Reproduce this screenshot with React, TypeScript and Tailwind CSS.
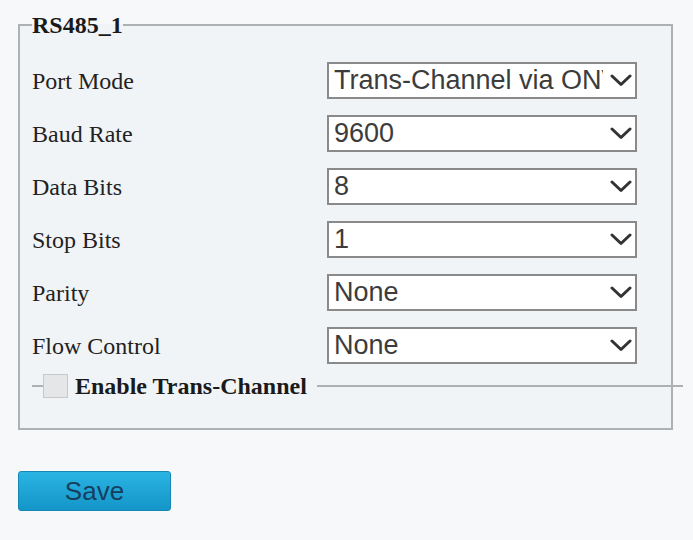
import React from "react";

const rows: { label: string; value: string; clip?: boolean }[] = [
  { label: "Port Mode", value: "Trans-Channel via ONVIF", clip: true },
  { label: "Baud Rate", value: "9600" },
  { label: "Data Bits", value: "8" },
  { label: "Stop Bits", value: "1" },
  { label: "Parity", value: "None" },
  { label: "Flow Control", value: "None" },
];

function Chevron() {
  return (
    <svg width="22" height="13" viewBox="0 0 22 13" className="shrink-0">
      <path d="M2 2 L11 10.5 L20 2" fill="none" stroke="#333" strokeWidth="3" strokeLinecap="round" strokeLinejoin="round" />
    </svg>
  );
}

export default function App() {
  return (
    <div className="w-[693px] h-[540px] bg-[#f6f8fa] overflow-hidden pt-[11px] font-['Liberation_Serif',serif]">
      <fieldset className="ml-[18px] w-[655px] h-[419px] border-2 border-[#aeb1b4] px-[12px] bg-[#f1f4f7]">
        <legend className="px-0 text-[24px] leading-[28px] font-bold text-[#1a1a1a]">RS485_1</legend>
        <div className="pt-[23px] flex flex-col gap-[16px]">
          {rows.map((r) => (
            <div key={r.label} className="flex items-center h-[37px]">
              <div className="w-[295px] text-[24px] text-[#222] leading-none">{r.label}</div>
              <div className="w-[310px] h-[37px] border-2 border-[#8a8a8a] bg-white flex items-center pl-[5px] pr-[3px]">
                {r.clip ? (
                  <div className="w-[269px] overflow-hidden whitespace-nowrap font-['Liberation_Sans',Arial,sans-serif] text-[27px] leading-[31px] text-[#3c3c3c]">
                    {r.value}
                  </div>
                ) : (
                  <div className="whitespace-nowrap font-['Liberation_Sans',Arial,sans-serif] text-[27px] leading-[31px] text-[#3c3c3c]">
                    {r.value}
                  </div>
                )}
                <div className="flex-1" />
                <Chevron />
              </div>
            </div>
          ))}
        </div>
        <div className="mt-[9px] flex items-center h-[26px] -mr-[24px]">
          <div className="w-[11px] h-[2px] bg-[#aeb1b4]" />
          <div className="w-[25px] h-[24px] bg-[#e4e6e8] border border-[#c6c8ca]" />
          <div className="ml-[7px] text-[24px] font-bold leading-none text-[#1a1a1a]">Enable Trans-Channel</div>
          <div className="ml-[10px] flex-1 h-[2px] bg-[#aeb1b4]" />
        </div>
      </fieldset>
      <div className="mt-[41px] ml-[18px]">
        <button className="w-[153px] h-[40px] rounded-[3px] border border-[#1787b5] bg-gradient-to-b from-[#2ab4e3] to-[#1395c8] font-['Liberation_Sans',Arial,sans-serif] text-[26px] leading-none text-[#163f5e] flex items-center justify-center">
          Save
        </button>
      </div>
    </div>
  );
}
